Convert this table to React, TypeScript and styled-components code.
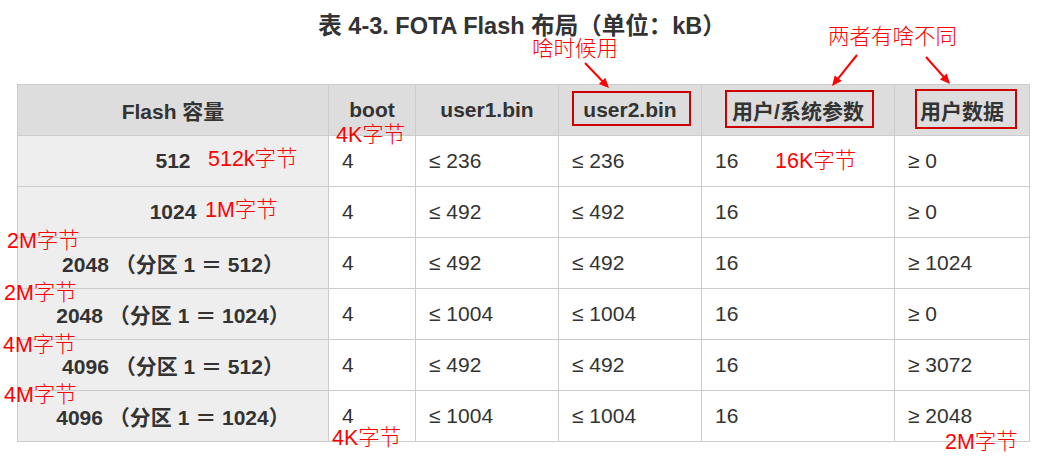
import React from "react";
import styled, { createGlobalStyle } from "styled-components";

const GlobalStyle = createGlobalStyle`
  html, body { margin: 0; padding: 0; background: #ffffff; }
  body {
    font-family: "Liberation Sans", Arial, "Noto Sans CJK SC", sans-serif;
    color: #333333;
  }
`;

const Page = styled.div`
  position: relative;
  width: 1053px;
  height: 466px;
  overflow: hidden;
  display: flex;
  flex-direction: column;
  align-items: flex-start;
`;

const Title = styled.h1`
  margin: 11px 0 0 17px;
  width: 1010px;
  height: 30px;
  line-height: 30px;
  font-size: 23.5px;
  font-weight: bold;
  text-align: center;
  color: #333333;
  white-space: nowrap;
`;

const Table = styled.table`
  margin: 43px 0 0 17px;
  border-collapse: collapse;
  table-layout: fixed;
  width: 1013px;
  font-size: 21px;
  color: #333333;
`;

const Row = styled.tr`
  height: 51px;
`;

const HeadCell = styled.th<{ $w: number }>`
  width: ${(p) => p.$w}px;
  padding: 0;
  background: #dddddd;
  border: 1px solid #cccccc;
  font-weight: bold;
  text-align: center;
  white-space: nowrap;
`;

const CapacityCell = styled.td`
  padding: 0;
  background: #eeeeee;
  border: 1px solid #cccccc;
  font-weight: bold;
  text-align: center;
  white-space: nowrap;
`;

const ValueCell = styled.td`
  padding: 0 0 0 13px;
  background: #ffffff;
  border: 1px solid #cccccc;
  text-align: left;
  white-space: nowrap;
`;

const Note = styled.span<{ $x: number; $y: number }>`
  position: absolute;
  left: ${(p) => p.$x}px;
  top: ${(p) => p.$y}px;
  font-family: "Liberation Sans", Arial, "Noto Sans CJK SC", sans-serif;
  font-size: 21.5px;
  font-weight: 300;
  line-height: 21px;
  color: #ff0000;
  white-space: nowrap;
  pointer-events: none;
`;

const Mark = styled.div<{ $x: number; $y: number; $w: number; $h: number }>`
  position: absolute;
  left: ${(p) => p.$x}px;
  top: ${(p) => p.$y}px;
  width: ${(p) => p.$w}px;
  height: ${(p) => p.$h}px;
  box-sizing: border-box;
  border: 2px solid #cc0000;
  pointer-events: none;
`;

const ArrowLayer = styled.svg`
  position: absolute;
  left: 0;
  top: 0;
  pointer-events: none;
`;

const columns = [
  { label: "Flash 容量", w: 310 },
  { label: "boot", w: 86 },
  { label: "user1.bin", w: 142 },
  { label: "user2.bin", w: 142 },
  { label: "用户/系统参数", w: 192 },
  { label: "用户数据", w: 134 },
];

const rows = [
  ["512", "4", "≤ 236", "≤ 236", "16", "≥ 0"],
  ["1024", "4", "≤ 492", "≤ 492", "16", "≥ 0"],
  ["2048 （分区 1 ＝ 512）", "4", "≤ 492", "≤ 492", "16", "≥ 1024"],
  ["2048 （分区 1 ＝ 1024）", "4", "≤ 1004", "≤ 1004", "16", "≥ 0"],
  ["4096 （分区 1 ＝ 512）", "4", "≤ 492", "≤ 492", "16", "≥ 3072"],
  ["4096 （分区 1 ＝ 1024）", "4", "≤ 1004", "≤ 1004", "16", "≥ 2048"],
];

const notes = [
  { t: "啥时候用", x: 532, y: 39 },
  { t: "两者有啥不同", x: 828, y: 27 },
  { t: "4K字节", x: 336, y: 125 },
  { t: "512k字节", x: 208, y: 149 },
  { t: "16K字节", x: 775, y: 151 },
  { t: "1M字节", x: 205, y: 200 },
  { t: "2M字节", x: 7, y: 231 },
  { t: "2M字节", x: 4, y: 283 },
  { t: "4M字节", x: 3, y: 335 },
  { t: "4M字节", x: 4, y: 385 },
  { t: "4K字节", x: 332, y: 428 },
  { t: "2M字节", x: 945, y: 432 },
];

const marks = [
  { x: 572, y: 91, w: 119, h: 35 },
  { x: 725, y: 90, w: 149, h: 38 },
  { x: 915, y: 89, w: 102, h: 40 },
];

const arrows = [
  { x1: 585, y1: 63, x2: 609, y2: 88 },
  { x1: 857, y1: 55, x2: 832, y2: 86 },
  { x1: 926, y1: 57, x2: 950, y2: 84 },
];

function arrowHead(x1: number, y1: number, x2: number, y2: number) {
  const a = Math.atan2(y2 - y1, x2 - x1);
  const len = 10;
  const half = 4.5;
  const bx = x2 - len * Math.cos(a);
  const by = y2 - len * Math.sin(a);
  const px = -Math.sin(a) * half;
  const py = Math.cos(a) * half;
  return `${x2},${y2} ${bx + px},${by + py} ${bx - px},${by - py}`;
}

export default function App() {
  return (
    <>
      <GlobalStyle />
      <Page>
        <Title>表 4-3. FOTA Flash 布局（单位：kB）</Title>
        <Table>
          <thead>
            <Row>
              {columns.map((c) => (
                <HeadCell key={c.label} $w={c.w}>
                  {c.label}
                </HeadCell>
              ))}
            </Row>
          </thead>
          <tbody>
            {rows.map((r, i) => (
              <Row key={i}>
                <CapacityCell>{r[0]}</CapacityCell>
                {r.slice(1).map((v, j) => (
                  <ValueCell key={j}>{v}</ValueCell>
                ))}
              </Row>
            ))}
          </tbody>
        </Table>
        {marks.map((m, i) => (
          <Mark key={i} $x={m.x} $y={m.y} $w={m.w} $h={m.h} />
        ))}
        <ArrowLayer width={1053} height={466} viewBox="0 0 1053 466">
          {arrows.map((a, i) => {
            const ang = Math.atan2(a.y2 - a.y1, a.x2 - a.x1);
            const ex = a.x2 - 8 * Math.cos(ang);
            const ey = a.y2 - 8 * Math.sin(ang);
            return (
              <g key={i}>
                <line x1={a.x1} y1={a.y1} x2={ex} y2={ey} stroke="#ff0000" strokeWidth={2} />
                <polygon points={arrowHead(a.x1, a.y1, a.x2, a.y2)} fill="#ff0000" />
              </g>
            );
          })}
        </ArrowLayer>
        {notes.map((n, i) => (
          <Note key={i} $x={n.x} $y={n.y}>
            {n.t}
          </Note>
        ))}
      </Page>
    </>
  );
}
